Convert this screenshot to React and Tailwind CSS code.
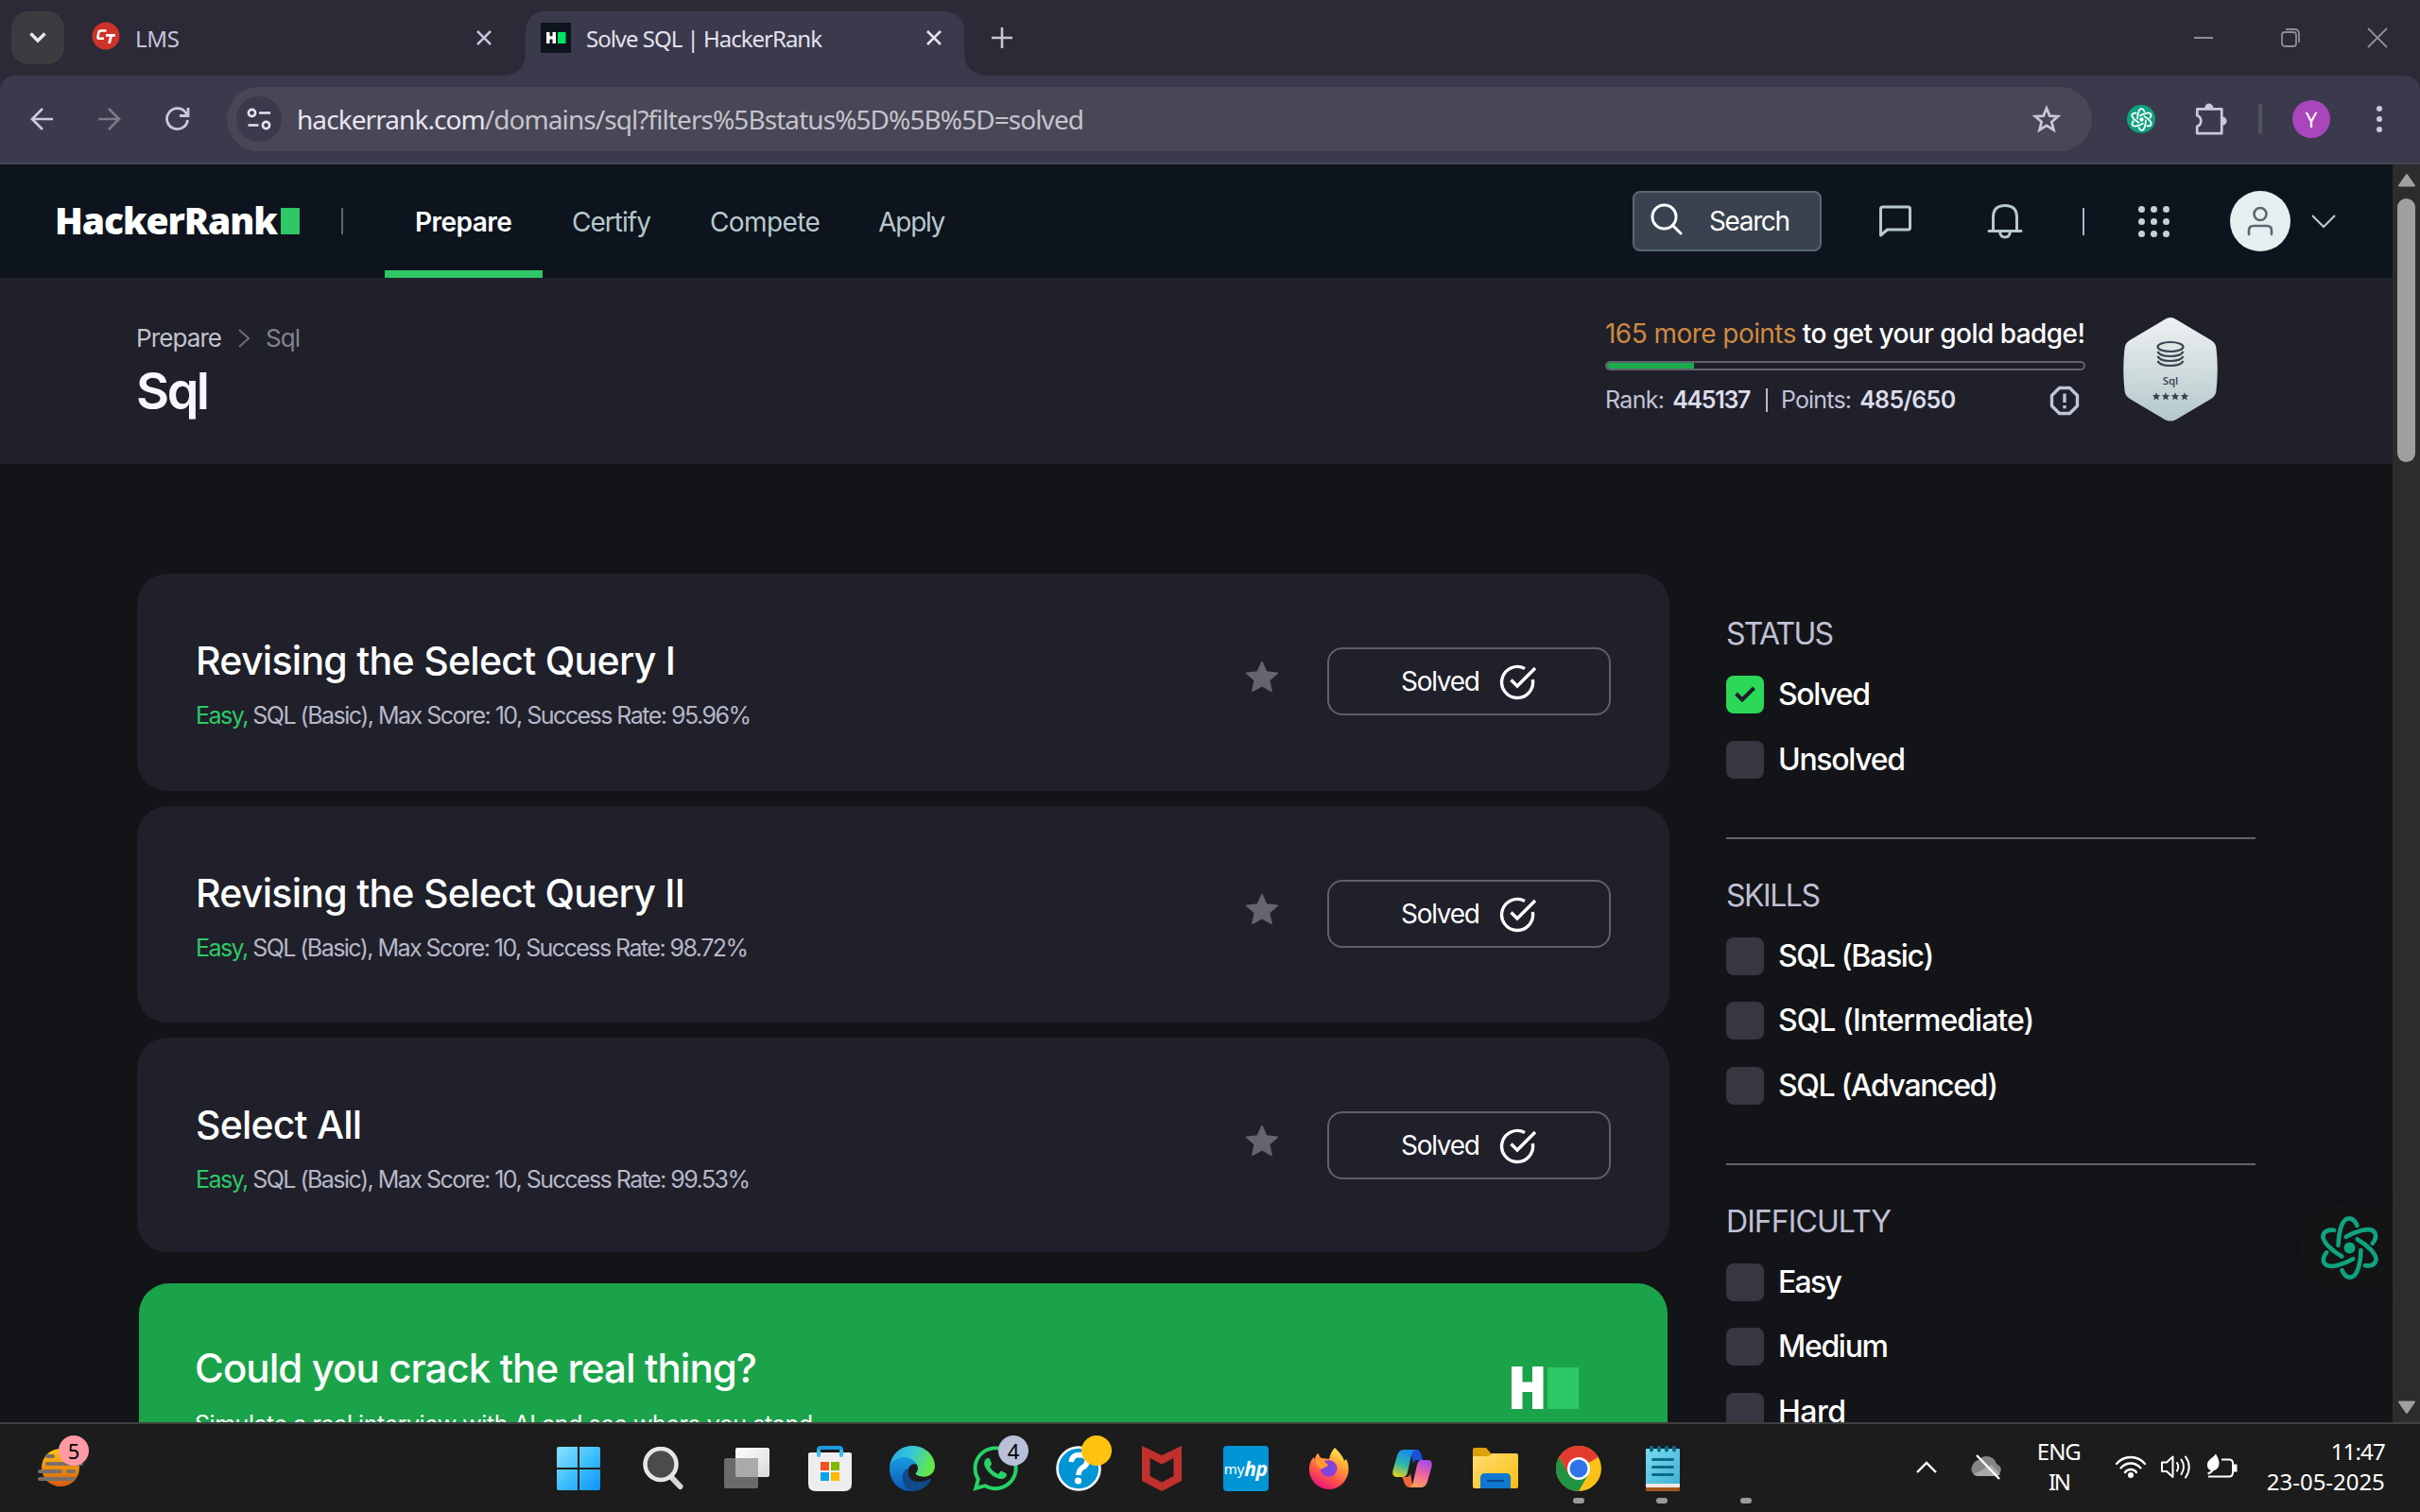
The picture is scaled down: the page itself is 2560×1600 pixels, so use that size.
import { useLayoutEffect, useRef } from "react";
import { FaWhatsapp } from "react-icons/fa";

/* A one-line label whose tracking is adjusted so that it spans `w` pixels. */
function Label({ w, className = "", children }) {
  const ref = useRef(null);
  useLayoutEffect(() => {
    const el = ref.current;
    el.style.letterSpacing = "0px";
    const natural = el.getBoundingClientRect().width;
    el.style.letterSpacing = `${(w - natural) / (el.textContent.length - 1)}px`;
  }, [w]);
  return (
    <span ref={ref} className={`inline-block whitespace-pre ${className}`}>
      {children}
    </span>
  );
}

/* ---------- browser chrome icons ---------- */

const Close = ({ className }) => (
  <svg viewBox="0 0 16 16" className={`h-4 w-4 ${className}`} fill="none" stroke="currentColor" strokeWidth="2.6">
    <path d="M1 1 15 15M15 1 1 15" />
  </svg>
);

function Knot({ className, width = 14 }) {
  return (
    <svg viewBox="-104 -104 208 208" className={className} fill="none" stroke="currentColor" strokeWidth={width} strokeLinecap="round">
      {[0, 60, 120, 180, 240, 300].map((a) => (
        <path key={a} transform={`rotate(${a})`} d="M-36-8C-36-36-28-94-2-94 12-94 19-84 24-71" />
      ))}
      <circle r="18" fill="currentColor" stroke="none" />
    </svg>
  );
}

function TabStrip() {
  return (
    <div className="flex h-20 bg-[#2b2a36] pt-3">
      <div className="ml-3 flex h-14 w-14 items-center justify-center rounded-[18px] bg-[#3c3b3f]">
        <svg viewBox="0 0 18 12" className="h-3 w-[18px]" fill="none" stroke="#e8e6ee" strokeWidth="3.4">
          <path d="M1.5 1.5 9 9 16.500 1.500" />
        </svg>
      </div>
      <div className="ml-[29px] flex h-14 w-[423px] items-center">
        <svg viewBox="0 0 30 30" className="-mt-1 h-[30px] w-[30px]">
          <circle cx="15" cy="15" r="14.500" fill="#cf3228" />
          <path d="M15.500 9.500H9.500Q8 9.500 7.500 11L6.500 16Q6.200 17.800 8 17.800H13" fill="none" stroke="#fff" strokeWidth="2.600" />
          <path d="M15 14.300H25M20.700 14.300 18.500 23" fill="none" stroke="#fff" strokeWidth="2.800" />
        </svg>
        <Label w={47} className="mt-0.5 ml-[16px] text-[24px] leading-[56px] text-[#c6c3dc]">LMS</Label>
        <Close className="ml-auto text-[#c6c3dc]" />
      </div>
      <svg viewBox="0 0 24 68" className="ml-[12px] h-[68px] w-6" fill="#3a3a4c">
        <path d="M0 68Q24 66 24 44V68Z" />
      </svg>
      <div className="flex h-[68px] w-[464px] rounded-t-[20px] bg-[#3a3a4c]">
        <div className="flex h-14 w-full items-center">
          <svg viewBox="0 0 32 32" className="ml-4 h-8 w-8">
            <rect width="32" height="32" fill="#0e141e" />
            <path d="M6 10h3.500v4.300h3V10H16v12h-3.500v-4.500h-3V22H6z" fill="#fff" />
            <rect x="18" y="10" width="8.500" height="12" fill="#05e363" />
          </svg>
          <Label w={250} className="mt-0.5 ml-[16px] text-[24px] leading-[56px] text-[#e4e1ee]">Solve SQL | HackerRank</Label>
          <Close className="ml-auto mr-6 text-[#e4e1ee]" />
        </div>
      </div>
      <svg viewBox="0 0 24 68" className="h-[68px] w-6" fill="#3a3a4c">
        <path d="M24 68Q0 66 0 44V68Z" />
      </svg>
      <svg viewBox="0 0 22 22" className="mt-[17px] ml-[5px] h-[22px] w-[22px]" stroke="#c9c6d4" strokeWidth="2.600">
        <path d="M11 0V22M0 11H22" />
      </svg>
      <div className="mt-[17px] mr-[34px] ml-auto flex gap-[70px] text-[#8f8e97]">
        <svg viewBox="0 0 22 22" className="h-[22px] w-[22px]" stroke="currentColor" strokeWidth="2"><path d="M1 11H21" /></svg>
        <svg viewBox="0 0 22 22" className="h-[22px] w-[22px]" fill="none" stroke="currentColor" strokeWidth="1.800">
          <rect x="2" y="5" width="15" height="15" rx="3" />
          <path d="M6 2H15Q20 2 20 7V16" />
        </svg>
        <svg viewBox="0 0 22 22" className="h-[22px] w-[22px]" stroke="currentColor" strokeWidth="1.800"><path d="M1 1 21 21M21 1 1 21" /></svg>
      </div>
    </div>
  );
}

function Toolbar() {
  return (
    <div className="h-[94px] bg-[#2b2a36]">
      <div className="flex h-[94px] items-center rounded-t-[16px] border-b-2 border-[#45464f] bg-[#3a3a4c]">
        <svg viewBox="0 0 24 24" className="ml-8 h-6 w-6" fill="none" stroke="#cbc7e0" strokeWidth="2.700">
          <path d="M24 12H2M13 1 2 12 13 23" />
        </svg>
        <svg viewBox="0 0 24 24" className="ml-12 h-6 w-6" fill="none" stroke="#7c7a88" strokeWidth="2.700">
          <path d="M0 12H22M11 1 22 12 11 23" />
        </svg>
        <svg viewBox="0 0 26 26" className="ml-[47px] h-[26px] w-[26px]" fill="none" stroke="#cbc7e0" strokeWidth="2.800">
          <path d="M23.500 14A11 11 0 1 1 21.500 6.200L23.500 9M24 1V9.500H15" />
        </svg>
        <div className="ml-[39px] flex h-[68px] w-[1973px] items-center rounded-full bg-[#484755]">
          <div className="ml-[10px] flex h-12 w-12 items-center justify-center rounded-full bg-[#3a3a4c]">
            <svg viewBox="0 0 26 24" className="h-6 w-[26px]" fill="none" stroke="#e6e3f0" strokeWidth="2.600">
              <circle cx="5.500" cy="5.500" r="3.600" />
              <path d="M13 5.500H25M1.500 18.500H12.500" />
              <circle cx="20.500" cy="18.500" r="3.600" />
            </svg>
          </div>
          <Label w={833} className="-mt-px ml-[16px] text-[28px] leading-[64px] text-[#c5c3cd]">
            <span className="text-[#e8e5f0]">hackerrank.com</span>/domains/sql?filters%5Bstatus%5D%5B%5D=solved
          </Label>
          <svg viewBox="0 0 32 32" className="mr-[32px] ml-auto h-8 w-8" fill="none" stroke="#cbc8d4" strokeWidth="2.700" strokeLinejoin="miter">
            <path d="M16 4.500 19.300 12.600 28 13.200 21.300 18.900 23.500 27.500 16 22.800 8.500 27.500 10.700 18.900 4 13.200 12.700 12.600Z" />
          </svg>
        </div>
        <div className="ml-[37px] flex h-[30px] w-[30px] items-center justify-center rounded-full bg-[#10a37f]">
          <Knot className="h-[25px] w-[25px] text-white" width={15} />
        </div>
        <svg viewBox="577 52 100 100" className="ml-[42px] h-[34px] w-[34px]">
          <path d="M584 70.500H660V146.500H583.500V125A18 18 0 0 0 583.500 91Z" fill="none" stroke="#cbc7e0" strokeWidth="8" strokeLinejoin="round" />
          <path d="M607 68A13 14 0 0 1 634 68ZM662 95A14 13 0 0 1 662 121Z" fill="#cbc7e0" />
        </svg>
        <div className="ml-[33px] h-8 w-1 rounded bg-[#52515f]" />
        <div className="ml-8 flex h-10 w-10 items-center justify-center rounded-full bg-[#a946bb] text-[22px] text-white">Y</div>
        <div className="ml-[49px] flex flex-col gap-[5px]">
          <i className="h-1.5 w-1.5 rounded-full bg-[#cbc7e0]" />
          <i className="h-1.5 w-1.5 rounded-full bg-[#cbc7e0]" />
          <i className="h-1.5 w-1.5 rounded-full bg-[#cbc7e0]" />
        </div>
      </div>
    </div>
  );
}

/* ---------- page ---------- */

function SiteHeader() {
  return (
    <div className="flex h-[120px] items-center bg-[#0e141e]">
      <Label w={236} className="-mt-0.5 ml-[58px] font-['Open_Sans'] text-[39px] leading-[60px] font-extrabold text-white">HackerRank</Label>
      <div className="ml-[4px] h-7 w-5 bg-[#2ec866]" />
      <div className="ml-11 h-7 w-0.5 bg-[#5c6770]" />
      <div className="ml-[44px] flex h-full text-[28px] leading-[122px] text-[#b7c9cc]">
        <div className="h-full w-[167px] border-b-8 border-[#2ec866] pl-8 text-white">
          <Label w={103} className="font-semibold">Prepare</Label>
        </div>
        <div className="px-[31px]"><Label w={84}>Certify</Label></div>
        <div className="pr-[31px] pl-8"><Label w={117}>Compete</Label></div>
        <div className="px-[31px]"><Label w={71}>Apply</Label></div>
      </div>
      <div className="ml-auto flex h-16 w-[200px] items-center rounded-lg border-2 border-[#576871] bg-[#39424e] text-white">
        <svg viewBox="0 0 34 34" className="-mt-1 ml-[17px] h-[34px] w-[34px]" fill="none" stroke="currentColor" strokeWidth="3">
          <circle cx="14.500" cy="14.500" r="12.500" />
          <path d="M23.500 23.500 32 32" strokeLinecap="round" />
        </svg>
        <Label w={86} className="ml-[28px] text-[28px] leading-[62px]">Search</Label>
      </div>
      <svg viewBox="0 0 36 36" className="ml-[60px] h-9 w-9" fill="none" stroke="#b7c9cc" strokeWidth="3" strokeLinejoin="round">
        <path d="M2.500 33V5Q2.500 3 4.500 3H31.500Q33.500 3 33.500 5V25Q33.500 27 31.500 27H9.500Z" />
      </svg>
      <svg viewBox="0 0 38 38" className="ml-[79px] h-[38px] w-[38px]" fill="none" stroke="#b7c9cc" strokeWidth="3" strokeLinecap="round" strokeLinejoin="round">
        <path d="M2 29.500H36M6.500 29V15Q6.500 2.500 19 2.500T31.500 15V29M13.500 30Q14 36 19 36T24.500 30" />
      </svg>
      <div className="ml-[63px] h-[29px] w-0.5 bg-[#a9b3c2]" />
      <div className="ml-[57px] grid grid-cols-3 gap-[6px]">
        {Array.from({ length: 9 }, (_, i) => (
          <i key={i} className="h-[7px] w-[7px] rounded-full bg-[#c3d1d6]" />
        ))}
      </div>
      <div className="ml-[64px] flex h-16 w-16 items-center justify-center rounded-full bg-[#e7eeef]">
        <svg viewBox="0 0 30 32" className="h-8 w-[30px]" fill="none" stroke="#576871" strokeWidth="2.600" strokeLinecap="round">
          <circle cx="15" cy="8.500" r="6.500" />
          <path d="M3 30V26Q3 21 8 21H22Q27 21 27 26V30" />
        </svg>
      </div>
      <svg viewBox="0 0 26 15" className="mr-[60px] ml-[22px] h-[15px] w-[26px]" fill="none" stroke="#b7c9cc" strokeWidth="2.200">
        <path d="M1 1 13 13 25 1" />
      </svg>
    </div>
  );
}

const STAR = "M0-10 2.900-3.500 10-2.800 4.700 1.900 6.200 9 0 5.400-6.200 9-4.700 1.900-10-2.800-2.900-3.500Z";

function Badge() {
  return (
    <svg viewBox="0 0 100 110" className="h-[110px] w-[100px]">
      <defs>
        <linearGradient id="silver" x1="0" y1="0" x2="0" y2="1">
          <stop offset="0" stopColor="#eef1f2" />
          <stop offset="1" stopColor="#b4c8ca" />
        </linearGradient>
      </defs>
      <path fill="url(#silver)" d="M50 0Q53 0 56 2L93 24Q98 27 98.500 33 101 55 98.500 77 98 83 93 86L56 108Q50 111 44 108L7 86Q2 83 1.500 77-1 55 1.500 33 2 27 7 24L44 2Q47 0 50 0Z" />
      <g fill="none" stroke="#39424e" strokeWidth="2.200">
        <ellipse cx="50" cy="31" rx="13.500" ry="5" />
        <path d="M36.500 36Q39 41 50 41T63.500 36M36.500 41Q39 46 50 46T63.500 41M36.500 46Q39 51 50 51T63.500 46" />
      </g>
      <text x="50" y="71" textAnchor="middle" fontSize="11.500" fontWeight="600" fill="#39424e" fontFamily="Open Sans">Sql</text>
      {[35, 45, 55, 65].map((x) => (
        <path key={x} d={STAR} transform={`translate(${x} 83.500) scale(.42)`} fill="#39424e" />
      ))}
    </svg>
  );
}

function TrackHeader() {
  return (
    <div className="flex h-[197px] bg-[#1f202a]">
      <div className="mt-[44px] ml-[144px] w-[1554px]">
        <div className="flex h-10 items-center text-[26px] leading-10">
          <Label w={91} className="text-[#c3c3cc]">Prepare</Label>
          <svg viewBox="0 0 12 20" className="ml-[18px] h-5 w-3" fill="none" stroke="#6b6c78" strokeWidth="2"><path d="M1 1 11 10 1 19" /></svg>
          <Label w={37} className="ml-[17px] text-[#82838f]">Sql</Label>
        </div>
        <Label w={78} className="mt-[6px] text-[54px] leading-[60px] font-semibold text-[#f7f7ff]">Sql</Label>
      </div>
      <div className="mt-[38px] w-[508px]">
        <Label w={508} className="text-[28px] leading-[42px] font-medium text-white">
          <span className="font-normal text-[#cf8a3f]">165 more points</span> to get your gold badge!
        </Label>
        <div className="mt-[8px] h-[10px] overflow-hidden rounded-[5px] border-2 border-[#62636e]">
          <div className="h-full w-[92px] bg-[#1ba94c]" />
        </div>
        <div className="mt-[11px] flex h-10 items-center text-[25px] leading-10 text-[#c2c2d8]">
          <Label w={63}>Rank:</Label>
          <Label w={83} className="ml-[9px] font-semibold text-[#dcdcec]">445137</Label>
          <div className="ml-[17px] h-[25px] w-0.5 bg-[#b9b9cc]" />
          <Label w={75} className="ml-[14px]">Points:</Label>
          <Label w={102} className="ml-[9px] font-semibold text-[#dcdcec]">485/650</Label>
          <svg viewBox="0 0 32 32" className="mt-0.5 mr-[6px] ml-auto h-8 w-8" fill="none" stroke="#c2c2d8" strokeWidth="3.400">
            <path d="M10.500 2.500H21.500L29.500 10.500V21.500L21.500 29.500H10.500L2.500 21.500V10.500Z" strokeLinejoin="round" />
            <path d="M16 8.500V18M16 21V24.300" />
          </svg>
        </div>
      </div>
      <div className="mt-[42px] ml-[40px]"><Badge /></div>
    </div>
  );
}

function Challenge({ title, titleWidth, detail, detailWidth, className }) {
  return (
    <div className={`flex w-[1621px] rounded-[32px] bg-[#1f202a] ${className}`}>
      <div className="mt-[67px] ml-[62px] flex w-[1110px] flex-col items-start">
        <Label w={titleWidth} className="text-[41px] leading-[50px] font-[450] text-white">{title}</Label>
        <Label w={detailWidth} className="mt-[18px] text-[25px] leading-[30px] text-[#b7b7c8]">
          <span className="text-[#2ec866]">Easy,</span>{detail}
        </Label>
      </div>
      <svg viewBox="-11 -11 22 21" className="mt-[92px] h-[34px] w-[36px]" fill="#646570" stroke="#646570" strokeWidth="1" strokeLinejoin="round">
        <path d={STAR} />
      </svg>
      <div className="mt-[78px] ml-[51px] flex h-[72px] w-[300px] items-center rounded-2xl border-2 border-[#5f606b] text-white">
        <Label w={84} className="ml-[76px] text-[28px] leading-[69px]">Solved</Label>
        <svg viewBox="0 0 40 40" className="ml-[21px] h-10 w-10" fill="none" stroke="currentColor" strokeWidth="3.400">
          <path d="M35.300 18A16.500 16.500 0 1 1 27 6.500M12.500 18.500 19 25 38 6" />
        </svg>
      </div>
    </div>
  );
}

function FilterGroup({ name, nameWidth, options, first, last }) {
  return (
    <div className={first ? "" : "mt-[44px]"}>
      <div className="flex h-8">
        <Label w={nameWidth} className="text-[32px] leading-8 text-[#c0c0d5]">{name}</Label>
      </div>
      <div className="mt-7 flex flex-col gap-[28.500px]">
        {options.map(([text, width, checked]) => (
          <div key={text} className="flex h-10 items-center">
            {checked ? (
              <div className="flex h-10 w-10 items-center justify-center rounded-lg bg-[#2bd858]">
                <svg viewBox="0 0 24 18" className="h-[18px] w-6" fill="none" stroke="#1f202a" strokeWidth="4"><path d="M2.500 8 9 14.500 21.500 2" /></svg>
              </div>
            ) : (
              <div className="h-10 w-10 rounded-lg bg-[#373741]" />
            )}
            <Label w={width} className="ml-[15px] text-[32px] leading-10 font-medium text-white">{text}</Label>
          </div>
        ))}
      </div>
      {!last && <div className="mt-[62px] h-0.5 w-[560px] bg-[#62636c]" />}
    </div>
  );
}

function Main() {
  return (
    <div className="flex h-[1014px] bg-[#131418]">
      <div className="mt-[116px] ml-[145px] w-[1681px]">
        <Challenge className="h-[230px]" title="Revising the Select Query I" titleWidth={508} detail=" SQL (Basic), Max Score: 10, Success Rate: 95.96%" detailWidth={588} />
        <Challenge className="mt-4 h-[229px]" title="Revising the Select Query II" titleWidth={518} detail=" SQL (Basic), Max Score: 10, Success Rate: 98.72%" detailWidth={585} />
        <Challenge className="mt-4 h-[227px]" title="Select All" titleWidth={176} detail=" SQL (Basic), Max Score: 10, Success Rate: 99.53%" detailWidth={587} />
        <div className="mt-[33px] ml-0.5 flex h-[230px] w-[1617px] rounded-t-[32px] bg-[#1ba34a] text-white">
          <div className="ml-[59px] flex w-[1393px] flex-col items-start">
            <Label w={595} className="mt-[65px] text-[42px] leading-[50px] font-[450]">Could you crack the real thing?</Label>
            <Label w={654} className="mt-[19px] text-[25px] leading-[30px]">Simulate a real interview with AI and see where you stand</Label>
          </div>
          <svg viewBox="0 0 72 46" className="mt-[88px] h-[46px] w-[72px]">
            <path d="M0 0H11.500V16.500H22V0H33.500V45H22V27H11.500V45H0Z" fill="#fff" />
            <rect x="38" y="1" width="33" height="44" fill="#2ec866" />
          </svg>
        </div>
      </div>
      <div className="mt-[164px]">
        <FilterGroup first name="STATUS" nameWidth={114} options={[["Solved", 98, true], ["Unsolved", 135]]} />
        <FilterGroup name="SKILLS" nameWidth={100} options={[["SQL (Basic)", 165], ["SQL (Intermediate)", 271], ["SQL (Advanced)", 233]]} />
        <FilterGroup last name="DIFFICULTY" nameWidth={175} options={[["Easy", 68], ["Medium", 117], ["Hard", 72]]} />
      </div>
    </div>
  );
}

function Scrollbar() {
  return (
    <div className="flex w-[29px] flex-col items-center bg-[#2c2c2c]">
      <svg viewBox="0 0 20 15" className="mt-[9px] h-[15px] w-5" fill="#9f9f9f" stroke="#9f9f9f" strokeWidth="2" strokeLinejoin="round"><path d="M10 2 18 13.500H2Z" /></svg>
      <div className="mt-[12px] h-[279px] w-[19px] rounded-full bg-[#9f9f9f]" />
      <svg viewBox="0 0 20 15" className="mt-auto mb-[8px] h-[15px] w-5" fill="#9f9f9f" stroke="#9f9f9f" strokeWidth="2" strokeLinejoin="round"><path d="M10 13 18 1.500H2Z" /></svg>
    </div>
  );
}

/* ---------- taskbar ---------- */

const Windows = () => (
  <svg viewBox="0 0 46 46" className="h-[46px] w-[46px]">
    <defs>
      <linearGradient id="win" x1="0" y1="0" x2="1" y2="1">
        <stop offset="0" stopColor="#8be2ff" />
        <stop offset=".5" stopColor="#40c0fb" />
        <stop offset="1" stopColor="#0a93fb" />
      </linearGradient>
    </defs>
    <path fill="url(#win)" d="M2 0H22V22H0V2Q0 0 2 0ZM24 0H44Q46 0 46 2V22H24ZM0 24H22V46H2Q0 46 0 44ZM24 24H46V44Q46 46 44 46H24Z" />
  </svg>
);

const SearchIcon = () => (
  <svg viewBox="0 0 44 46" className="ml-[3px] h-[46px] w-11" fill="none">
    <path d="M31 33 39.500 42" stroke="#d5d8da" strokeWidth="6" strokeLinecap="round" />
    <circle cx="19" cy="18.500" r="16.500" fill="#4b4b4b" stroke="#e6e8e8" strokeWidth="4.500" />
  </svg>
);

const TaskView = () => (
  <svg viewBox="0 0 48 46" className="ml-[3px] h-[46px] w-12">
    <defs>
      <linearGradient id="tv" x1="0" y1="0" x2="1" y2="1"><stop offset="0" stopColor="#fff" /><stop offset="1" stopColor="#d9d9d9" /></linearGradient>
    </defs>
    <rect x="12" y="1" width="36" height="31" rx="2" fill="url(#tv)" />
    <rect y="12" width="36" height="32" rx="2" fill="#6b6b6b" />
    <path d="M12 12H34Q36 12 36 14V32H14Q12 32 12 30Z" fill="#aaa" />
  </svg>
);

const Store = () => (
  <svg viewBox="0 0 46 48" className="ml-0.5 h-12 w-[46px]">
    <path d="M11 11V4Q11 2 13 2H33Q35 2 35 4V11" fill="none" stroke="#1c9be0" strokeWidth="4" />
    <path d="M0 9Q0 7 2 7H44Q46 7 46 9V40Q46 48 38 48H8Q0 48 0 40Z" fill="#eeeeee" />
    <path d="M11 6V10M35 6V10" stroke="#35c1f3" strokeWidth="4" strokeLinecap="round" />
    <path d="M13 17h9v9h-9z" fill="#f25022" /><path d="M24 17h9v9h-9z" fill="#7fba00" />
    <path d="M13 28h9v9h-9z" fill="#00a4ef" /><path d="M24 28h9v9h-9z" fill="#ffb900" />
  </svg>
);

const Edge = () => (
  <svg viewBox="0 0 256 256" className="h-12 w-12">
    <defs>
      <linearGradient id="eg1" x1="0" y1="0" x2="1" y2=".3"><stop offset="0" stopColor="#2aa7dd" /><stop offset=".5" stopColor="#35c6dc" /><stop offset="1" stopColor="#62e64c" /></linearGradient>
      <linearGradient id="eg2" x1="0" y1="0" x2="0" y2="1"><stop offset="0" stopColor="#1b9de2" /><stop offset="1" stopColor="#0c59b8" /></linearGradient>
    </defs>
    <path fill="url(#eg2)" d="M0 128C6 78 40 60 84 60 128 60 152 84 158 108 140 96 112 104 106 132 92 190 140 222 196 216 176 244 146 256 122 256 50 256 0 198 0 128Z" />
    <path fill="#114a8b" d="M106 128C92 190 146 226 226 186 232 183 236 188 233 193 210 233 172 256 132 256 92 250 70 216 72 176 74 150 88 134 106 128Z" />
    <path fill="url(#eg1)" d="M0 124C6 50 60 0 128 0 204 0 256 56 256 114 256 152 226 174 192 174 168 174 148 164 148 156 148 150 160 146 160 128 160 96 124 64 80 64 34 64 6 94 0 124Z" />
  </svg>
);

const Help = () => (
  <svg viewBox="0 0 48 48" className="h-12 w-12">
    <circle cx="24" cy="24" r="22.500" fill="#0096d6" stroke="#fff" strokeWidth="2.600" />
    <path d="M16 17Q17 9.500 25 9.500 34 10 33 17 32.500 21 28 23 24 25.500 24 31" fill="none" stroke="#fff" strokeWidth="5.500" />
    <circle cx="23.500" cy="37" r="3.600" fill="#fff" />
  </svg>
);

const McAfee = () => (
  <svg viewBox="0 0 42 48" className="h-12 w-[42px]">
    <path fill="#c0302c" fillRule="evenodd" d="M0 0 21 10 42 0V37L21 48 0 37ZM8.500 13V32L21 38.500 33.500 32V13L21 19.500Z" />
  </svg>
);

const Firefox = () => (
  <svg viewBox="0 0 42 44" className="h-11 w-[42px]">
    <defs>
      <linearGradient id="ff" x1=".8" y1="0" x2=".3" y2="1"><stop offset="0" stopColor="#fff44f" /><stop offset=".35" stopColor="#ffa436" /><stop offset=".7" stopColor="#ff4f4b" /><stop offset="1" stopColor="#e2107c" /></linearGradient>
      <radialGradient id="ffp"><stop offset="0" stopColor="#6a4bd8" /><stop offset="1" stopColor="#9a3bdc" /></radialGradient>
    </defs>
    <path fill="url(#ff)" d="M27 0C31 4 36 9 37 14L39 12C42 17 42 24 41 28 38 38 30 44 21 44 9 44 0 34 0 23 0 17 2 12 5 10L6 13C6 10 7 7 10 6 10 8 11 10 13 11L21 12C22 7 24 3 27 0Z" />
    <circle cx="20.500" cy="22" r="9" fill="url(#ffp)" />
    <path fill="#ff9a2e" d="M7 12C10 13 14 12 20 18 19 21 15 20 13 23 10 21 6 18 7 12Z" />
  </svg>
);

const Copilot = () => (
  <svg viewBox="0 0 42 40" className="h-10 w-[42px]">
    <defs>
      <linearGradient id="cp1" x1=".5" y1="0" x2=".2" y2="1"><stop offset="0" stopColor="#1a8af0" /><stop offset=".5" stopColor="#2bb6a8" /><stop offset="1" stopColor="#e8d21c" /></linearGradient>
      <linearGradient id="cp2" x1=".6" y1="0" x2=".3" y2="1"><stop offset="0" stopColor="#a54bea" /><stop offset=".5" stopColor="#f0649a" /><stop offset="1" stopColor="#ffa25a" /></linearGradient>
    </defs>
    <path d="M13 0H25Q29 0 30.500 5L32 11H27Q23 11 22 15L20 5Z" fill="#1b52d8" />
    <path d="M10 28 14 29Q18 29 19 25L21 36 25 40H19Q14 40 12.500 35Z" fill="#f2643c" />
    <path d="M12 0H24Q21 1 20 6L16 24Q15 29 10 29H5Q-1 29 .5 22L5 6Q7 0 12 0Z" fill="url(#cp1)" />
    <path d="M31 11H37Q43 11 41.500 18L37 34Q35 40 30 40H18Q21 39 22 34L26 16Q27 11 31 11Z" fill="url(#cp2)" />
  </svg>
);

const Explorer = () => (
  <svg viewBox="0 0 48 44" className="h-11 w-12">
    <defs><linearGradient id="ex" x1="0" y1="0" x2="1" y2="1"><stop offset="0" stopColor="#ffdf76" /><stop offset="1" stopColor="#fbbc0e" /></linearGradient></defs>
    <path d="M0 2Q0 0 2 0H14L20 7V17H0Z" fill="#e0a008" />
    <path d="M0 9H15Q17 9 18 8L20 6H46Q48 6 48 8V41Q48 43 46 43H2Q0 43 0 41Z" fill="url(#ex)" />
    <path d="M8 43V32Q8 27 13 27H35Q40 27 40 32V43Z" fill="#0f78cf" />
    <path d="M15 35H33" stroke="#0a4a8a" strokeWidth="2" />
  </svg>
);

const Chrome = () => (
  <svg viewBox="0 0 48 48" className="h-12 w-12">
    <circle cx="24" cy="24" r="24" fill="#fbc116" />
    <path d="M24 24 3.200 12A24 24 0 0 1 44.800 12Z" fill="#e33b2e" />
    <path d="M3.200 12A24 24 0 0 0 24 48L34.400 30 24 24 13.600 30Z" fill="#229342" />
    <path d="M24 12H44.800L34 12ZM3.200 12 13.600 30 20 18Z" fill="#e33b2e" />
    <circle cx="24" cy="24" r="12" fill="#fff" />
    <circle cx="24" cy="24" r="9.500" fill="#2f74e8" />
  </svg>
);

const Notepad = () => (
  <svg viewBox="0 0 36 48" className="h-12 w-9">
    <defs><linearGradient id="np" x1="0" y1="0" x2="1" y2="1"><stop offset="0" stopColor="#7adcf2" /><stop offset="1" stopColor="#3fb0d2" /></linearGradient></defs>
    <rect y="3" width="36" height="38" rx="1" fill="url(#np)" />
    <rect y="40" width="36" height="4" fill="#f0e9e5" />
    <rect y="44" width="36" height="4" rx="1" fill="#a4561c" />
    <path d="M6 1.500V4.500M14 1.500V4.500M22 1.500V4.500M30 1.500V4.500" stroke="#0b6a88" strokeWidth="4" strokeLinecap="round" />
    <path d="M7.500 14.500H28.500M7.500 22.500H28.500M7.500 30.500H28.500" stroke="#0b6a88" strokeWidth="3" strokeLinecap="round" />
  </svg>
);

function Slot({ running, badge, badgeClass, children }) {
  return (
    <div className="relative flex h-[93px] w-[88.200px] items-center justify-center">
      {children}
      {badgeClass && (
        <span className={`absolute top-[12px] left-[47px] flex h-8 w-8 items-center justify-center rounded-full text-[22px] leading-8 text-black ${badgeClass}`}>{badge}</span>
      )}
      {running && <span className="absolute bottom-[9px] left-[38px] h-1.5 w-3 rounded-full bg-[#9a9a9a]" />}
    </div>
  );
}

function Taskbar() {
  return (
    <div className="flex h-[95px] items-center border-t-2 border-[#404040] bg-[#1c1c1c]">
      <div className="relative h-[93px] w-[568px]">
        <svg viewBox="0 0 50 44" className="mt-[24px] ml-[38px] h-11 w-[50px]">
          <defs><linearGradient id="wx" x1="0" y1="0" x2="0" y2="1"><stop offset="0" stopColor="#ffc50f" /><stop offset="1" stopColor="#d65a10" /></linearGradient></defs>
          <circle cx="26" cy="22" r="20" fill="url(#wx)" />
          <path d="M12 10H18M12 18H48M4 26H26M34 26H40M4 34H40" stroke="#7a7068" strokeWidth="4" strokeLinecap="round" />
        </svg>
        <span className="absolute top-[12px] left-[62px] flex h-8 w-8 items-center justify-center rounded-full bg-[#ff99a4] text-[22px] leading-8 text-black">5</span>
      </div>
      <Slot><Windows /></Slot>
      <Slot><SearchIcon /></Slot>
      <Slot><TaskView /></Slot>
      <Slot><Store /></Slot>
      <Slot><Edge /></Slot>
      <Slot badge="4" badgeClass="bg-[#b9bfd9]"><FaWhatsapp className="h-[54px] w-[54px] text-[#25d366]" /></Slot>
      <Slot badgeClass="bg-[#ffc20e]"><Help /></Slot>
      <Slot><McAfee /></Slot>
      <Slot>
        <div className="flex h-12 w-12 items-center justify-center rounded bg-[#0096d6] text-white">
          <span className="text-[15px] leading-5">my</span>
          <span className="text-[21px] leading-5 font-bold tracking-tight italic">hp</span>
        </div>
      </Slot>
      <Slot><Firefox /></Slot>
      <Slot><Copilot /></Slot>
      <Slot><Explorer /></Slot>
      <Slot running><Chrome /></Slot>
      <Slot running><Notepad /></Slot>
      <Slot running />
      <div className="ml-[136px] flex items-center pb-[3px] text-white">
        <svg viewBox="0 0 22 13" className="h-[13px] w-[22px]" fill="none" stroke="currentColor" strokeWidth="2.400"><path d="M1 12 11 2 21 12" /></svg>
        <svg viewBox="0 0 34 28" className="ml-[36px] h-7 w-[34px]">
          <path d="M8 7A11 11 0 0 1 27 11L31 14A7 7 0 0 1 26 24H7A7.500 7.500 0 0 1 2 12 8 8 0 0 1 8 7Z" fill="#858585" />
          <path d="M3 22 22 12 31 22Q29 24 26 24H7Q5 24 3 22Z" fill="#a8a8a8" />
          <path d="M6 2 30 27" stroke="#fff" strokeWidth="2.400" />
        </svg>
        <div className="ml-[31px] flex w-[56px] flex-col items-center text-[24px] leading-8">
          <Label w={47}>ENG</Label>
          <Label w={24}>IN</Label>
        </div>
        <svg viewBox="0 0 34 26" className="ml-[31px] h-[26px] w-[34px]" fill="none" stroke="currentColor" strokeWidth="2.300" strokeLinecap="round">
          <path d="M2 10Q8 3 17 3T32 10M6.500 14.500Q11 9.500 17 9.500T27.500 14.500M11 19Q13 16 17 16T23 19" />
          <circle cx="17" cy="22" r="1.900" fill="currentColor" />
        </svg>
        <svg viewBox="0 0 34 30" className="ml-[14px] h-[30px] w-[34px]" fill="none" stroke="currentColor" strokeWidth="2" strokeLinecap="round" strokeLinejoin="round">
          <path d="M2 10.500H7L13.500 4.500V26L7 20H2ZM18 11Q20.500 15 18 19.500M22.500 7.500Q27.500 15 22.500 23M27 4.500Q34.500 15 27 26.500" />
        </svg>
        <svg viewBox="0 0 34 30" className="ml-[14px] h-[30px] w-[34px]" fill="none" stroke="currentColor" strokeWidth="2">
          <path d="M17 7.500H25Q29 7.500 29 11.500V21Q29 25.500 25 25.500H3" />
          <path d="M30 13.500H32.500V19.500H30Z" fill="currentColor" />
          <path d="M11 1.500C15 8 16 14 12 17.500 8 21 1 19 2 12 3 7 8 6 11 1.500Z" fill="currentColor" stroke="none" />
          <path d="M9.500 16Q7 21 2.500 22.500" />
        </svg>
        <div className="ml-[30px] flex w-[126px] flex-col items-end text-[24px] leading-8">
          <Label w={58}>11:47</Label>
          <Label w={125}>23-05-2025</Label>
        </div>
      </div>
    </div>
  );
}

export default function App() {
  return (
    <div className="h-[1600px] w-[2560px] overflow-hidden bg-[#131418] font-['Noto_Sans',sans-serif]">
      <TabStrip />
      <Toolbar />
      <div className="flex h-[1331px] overflow-hidden">
        <div className="relative w-[2531px] overflow-hidden font-['Inter',sans-serif]">
          <SiteHeader />
          <TrackHeader />
          <Main />
          <div className="absolute top-[1101px] right-0 flex h-[90px] w-[98px] items-center justify-center rounded-l-[40px] bg-[#141414] pl-[7px] shadow-[0_0_14px_#0004]">
            <Knot className="h-[69px] w-[69px] text-[#0fa37f]" />
          </div>
        </div>
        <Scrollbar />
      </div>
      <Taskbar />
    </div>
  );
}
